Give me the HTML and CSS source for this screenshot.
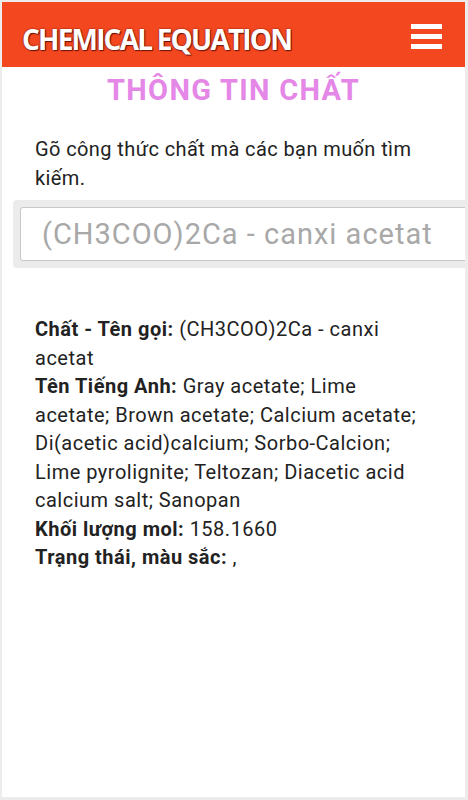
FILE: index.html
```html
<!DOCTYPE html>
<html lang="vi">
<head>
    <meta charset="UTF-8">
    <meta name="viewport" content="width=device-width, initial-scale=1.0">
    <title>Chemical Equation - Thông tin chất</title>
    <link rel="stylesheet" href="styles.css">
</head>
<body>
    <div class="page">
        <header class="topbar">
            <a href="#" class="logo">CHEMICAL EQUATION</a>
            <a href="#" class="menu-btn" aria-label="Menu">
                <span></span><span></span><span></span>
            </a>
        </header>

        <h1 class="title">THÔNG TIN CHẤT</h1>

        <p class="hint">Gõ công thức chất mà các bạn muốn tìm kiếm.</p>

        <div class="search">
            <input type="text" placeholder="(CH3COO)2Ca - canxi acetat">
        </div>

        <div class="info">
            <b>Chất - Tên gọi:</b> (CH3COO)2Ca - canxi acetat<br>
            <b>Tên Tiếng Anh:</b> Gray acetate; Lime acetate; Brown acetate; Calcium acetate; Di(acetic acid)calcium; Sorbo-Calcion; Lime pyrolignite; Teltozan; Diacetic acid calcium salt; Sanopan<br>
            <b>Khối lượng mol:</b> 158.1660<br>
            <b>Trạng thái, màu sắc:</b> ,
        </div>
    </div>
</body>
</html>
```

FILE: styles.css
```css
html, body {height: 100%;}
body {
    margin: 0;
    font-family: Roboto, "Noto Sans", sans-serif;
    background-color: #ececec;
    color: #222;
}
.page {
    box-sizing: border-box;
    height: calc(100% - 5px);
    margin: 2px 3px 3px 2px;
    background-color: #fff;
    overflow: hidden;
}
.topbar {
    display: flex;
    align-items: center;
    justify-content: space-between;
    height: 65px;
    padding: 0 23px 0 20px;
    background-color: #f3481f;
}
.logo {
    padding-top: 8px;
    font-family: "Open Sans", sans-serif;
    font-weight: 700;
    font-size: 28px;
    letter-spacing: -1.8px;
    color: #fff;
    text-decoration: none;
    text-shadow: 0 0 2px #6e140a, 1px 1px 1px #6e140a;
}
.menu-btn {
    display: flex;
    flex-direction: column;
    gap: 5px;
    width: 31px;
    padding-top: 4px;
}
.menu-btn span {
    height: 5px;
    background-color: #fff;
}
.title {
    margin: 6px 0 0;
    text-align: center;
    font-size: 29px;
    font-weight: 700;
    letter-spacing: 1.3px;
    color: #e487e7;
}
.hint {
    margin: 28px 38px 0 33px;
    font-size: 20px;
    letter-spacing: 0.4px;
    line-height: 28.5px;
}
.search {
    margin: 8px -20px 0 11px;
    padding: 7px;
    background-color: #ebebeb;
    border-radius: 4px;
}
.search input {
    box-sizing: border-box;
    width: 100%;
    height: 54px;
    padding: 0 21px;
    border: 1px solid #c8c8c8;
    border-radius: 3px;
    font-family: Roboto, sans-serif;
    font-size: 29px;
    letter-spacing: 1px;
    color: #333;
}
.search input::placeholder {color: #a8a8a8;}
.info {
    margin: 47px 38px 0 33px;
    font-size: 20px;
    letter-spacing: 0.5px;
    line-height: 28.5px;
}
```
